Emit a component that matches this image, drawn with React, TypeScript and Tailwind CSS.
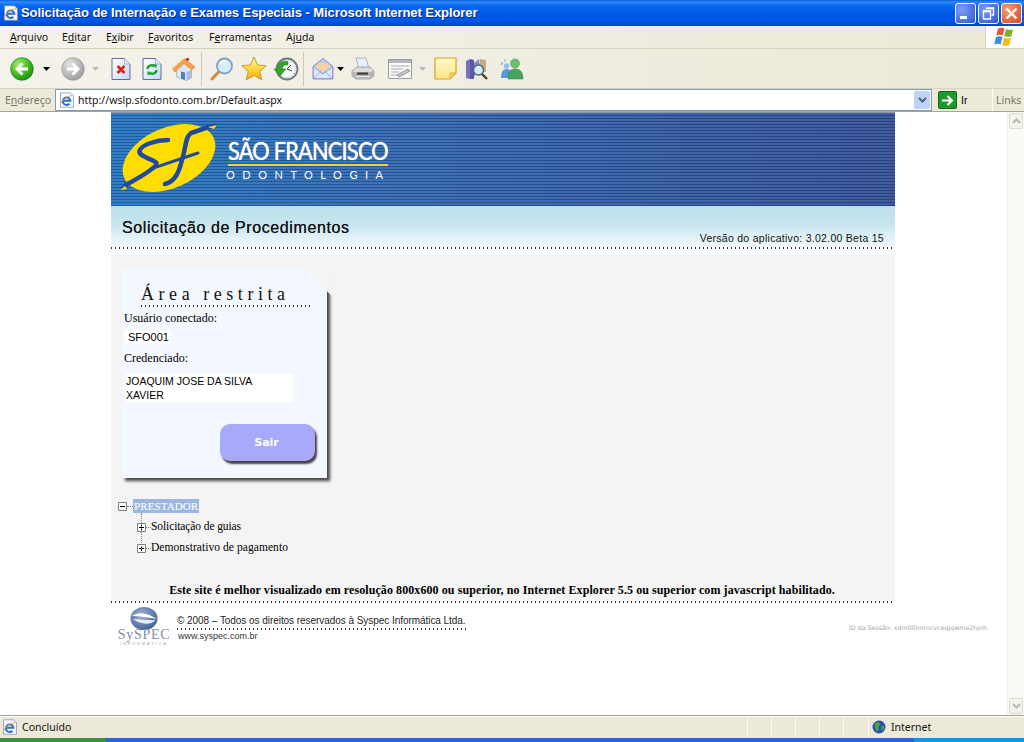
import React from "react";

const serif = "font-['Liberation_Serif',serif]";
const arial = "font-['Liberation_Sans',sans-serif]";

function Arrow({ c = "#000", className = "" }: { c?: string; className?: string }) {
  return (
    <svg width="7" height="4" viewBox="0 0 7 4" className={className}>
      <path d="M0 0h7L3.5 4z" fill={c} />
    </svg>
  );
}

function RoundArrow({ gray = false }: { gray?: boolean }) {
  const id = gray ? "ga" : "gb";
  return (
    <svg width="24" height="24" viewBox="0 0 24 24" className="shrink-0">
      <defs>
        <radialGradient id={id} cx="0.35" cy="0.3" r="0.85">
          <stop offset="0" stopColor={gray ? "#e4e4e4" : "#a8ee70"} />
          <stop offset="0.55" stopColor={gray ? "#b8b8b8" : "#3fb81f"} />
          <stop offset="1" stopColor={gray ? "#8e8e8e" : "#137d10"} />
        </radialGradient>
      </defs>
      <circle cx="12" cy="12" r="11.3" fill={`url(#${id})`} stroke={gray ? "#9a9a9a" : "#1a7f14"} strokeWidth="0.7" />
      {gray ? (
        <path d="M6 12h10M11.500 6.500L17 12l-5.500 5.500" fill="none" stroke="#fff" strokeWidth="2.800" />
      ) : (
        <path d="M18 12H8M12.500 6.500L7 12l5.500 5.500" fill="none" stroke="#fff" strokeWidth="2.800" />
      )}
    </svg>
  );
}

function PageBase({ children }: { children: React.ReactNode }) {
  return (
    <svg width="20" height="24" viewBox="0 0 20 24" className="shrink-0">
      <defs>
        <linearGradient id="pg" x1="0" y1="0" x2="1" y2="1">
          <stop offset="0" stopColor="#fff" />
          <stop offset="1" stopColor="#c5d5f2" />
        </linearGradient>
      </defs>
      <path d="M1 1.5h12.5L19 7v15.5H1z" fill="url(#pg)" stroke="#5e6f9f" />
      <path d="M13.5 1.5V7H19" fill="#e8eefb" stroke="#8b9ac0" strokeWidth="0.7" />
      {children}
    </svg>
  );
}

function Home() {
  return (
    <svg width="24" height="24" viewBox="0 0 24 24" className="shrink-0">
      <path d="M4.500 11.500L12 6l7.500 5.500V21l-5 2.500L4.500 20z" fill="#dce6f5" stroke="#8a9ab8" strokeWidth="0.6" />
      <path d="M14.500 23.400v-8l4.800-2.300V21z" fill="#a9bce0" />
      <path d="M9 21.500v-7l4 1v7.500z" fill="#4d7cc4" />
      <path d="M0.500 12L12.500 1.500 23 10l-3.200 3L12 6.500 3 15z" fill="#f5a24a" stroke="#d67f28" strokeWidth="0.5" />
      <circle cx="15.500" cy="2.300" r="1.600" fill="#b8332a" />
    </svg>
  );
}

function Search() {
  return (
    <svg width="24" height="24" viewBox="0 0 24 24" className="shrink-0">
      <path d="M2 22l7.500-8" stroke="#d18c3d" strokeWidth="3" strokeLinecap="round" />
      <circle cx="14.500" cy="9" r="7.500" fill="#d7ecfb" stroke="#7d9fc6" strokeWidth="1.800" />
      <path d="M10 7a5 4 0 0 1 6-2.500" stroke="#fff" strokeWidth="2" fill="none" />
    </svg>
  );
}

function Star() {
  return (
    <svg width="26" height="25" viewBox="0 0 26 25" className="shrink-0">
      <defs>
        <linearGradient id="st" x1="0" y1="0" x2="0" y2="1">
          <stop offset="0" stopColor="#fff6a8" />
          <stop offset="0.6" stopColor="#ffd22d" />
          <stop offset="1" stopColor="#f6a913" />
        </linearGradient>
      </defs>
      <path d="M13 1l3.600 8 8.600.8-6.500 5.600 2 8.400L13 19.400 5.300 23.800l2-8.400L.8 9.800 9.400 9z" fill="url(#st)" stroke="#b98a15" strokeWidth="0.8" />
    </svg>
  );
}

function History() {
  return (
    <svg width="26" height="24" viewBox="0 0 26 24" className="shrink-0">
      <circle cx="14" cy="12" r="10.500" fill="#dfe7ee" stroke="#6c7d7c" strokeWidth="1.800" />
      <circle cx="14" cy="12" r="7.500" fill="#f7f9fb" />
      <path d="M14 12l4-4M14 12l5 2" stroke="#444" strokeWidth="1" />
      <path d="M21.500 6l1 1M22 17l-1-1" stroke="#d66" strokeWidth="1" />
      <path d="M15 4.500C8 3 4.500 7 4.500 12H1l6 7 6-7H9.500C9.500 9 11 7.500 15 8z" fill="#37a32a" stroke="#1d7a18" strokeWidth="0.5" />
    </svg>
  );
}

function Mail() {
  return (
    <svg width="22" height="24" viewBox="0 0 22 24" className="shrink-0">
      <path d="M1 9.500L11 1.500l10 8V22H1z" fill="#bfc9ee" stroke="#8e8fc9" />
      <path d="M4 10l3-4h8l3 4-7 5z" fill="#f4d49c" />
      <path d="M1.500 10l9.500 7 9.500-7v11.500h-19z" fill="#dce8fb" stroke="#8e8fc9" strokeWidth="0.7" />
      <path d="M1.500 21.500L9 14.500M20.500 21.500L13 14.500" stroke="#8e8fc9" strokeWidth="0.7" />
    </svg>
  );
}

function Printer() {
  return (
    <svg width="24" height="24" viewBox="0 0 24 24" className="shrink-0">
      <path d="M5 1h10l3 11H8z" fill="#e6f0fb" stroke="#8fa6c0" strokeWidth="0.8" />
      <path d="M1 14l5-4h13l4 4v5l-4 3H5l-4-3z" fill="#dcdcdc" stroke="#8a8a8a" strokeWidth="0.7" />
      <path d="M1.500 15h17.500l3.500-1v5l-3.500 2.500H5l-3.500-2.500z" fill="#b4b4b4" />
      <path d="M6 15.500h11v2.200H6z" fill="#3f3f3f" />
      <path d="M5 19.500h14" stroke="#ededed" />
    </svg>
  );
}

function EditIcon() {
  return (
    <svg width="24" height="20" viewBox="0 0 24 20" className="shrink-0">
      <path d="M.5 .5h23v19H.5z" fill="#fafafa" stroke="#9b9b9b" />
      <path d="M1 1h22v3H1z" fill="#b5b5b5" />
      <path d="M3 7h18M3 10h12M3 13h8M3 16h6" stroke="#aaa" />
      <path d="M9 16l11-6 2 2-11 6z" fill="#c9c9c9" stroke="#777" strokeWidth="0.7" />
    </svg>
  );
}

function Note() {
  return (
    <svg width="23" height="23" viewBox="0 0 23 23" className="shrink-0">
      <defs>
        <linearGradient id="nt" x1="0" y1="0" x2="0" y2="1">
          <stop offset="0" stopColor="#fff9c4" />
          <stop offset="1" stopColor="#fde48a" />
        </linearGradient>
      </defs>
      <path d="M1 1h21v15l-6 6H1z" fill="url(#nt)" stroke="#d9a224" strokeWidth="1.200" />
      <path d="M16 22v-6h6z" fill="#f0d070" stroke="#d9a224" strokeWidth="0.7" />
    </svg>
  );
}

function Research() {
  return (
    <svg width="24" height="24" viewBox="0 0 24 24" className="shrink-0">
      <path d="M1 4l4-2v20l-4-1z" fill="#7470bd" />
      <path d="M5 2l4 1v19l-4 0z" fill="#5c58a8" />
      <path d="M9 6l5-4 1 8-6 10z" fill="#8d86c9" />
      <path d="M15 2l6 1v12H15z" fill="#c3ae7d" />
      <circle cx="13.500" cy="13" r="5" fill="#d8ecf7" stroke="#506a80" strokeWidth="1.500" />
      <path d="M17 17l5 5" stroke="#54391c" strokeWidth="2.400" />
    </svg>
  );
}

function Messenger() {
  return (
    <svg width="24" height="22" viewBox="0 0 24 22" className="shrink-0">
      <circle cx="6.500" cy="8" r="2.800" fill="#8ec2ea" />
      <path d="M1 20c0-6 2-9 5.500-9S12 14 12 20z" fill="#5b9ad8" />
      <circle cx="15" cy="5.500" r="4.500" fill="#6cc06c" stroke="#3b8f4b" strokeWidth="0.5" />
      <path d="M8 21c0-8 2.500-10 7-10s8 2 8 10z" fill="#4aa35c" stroke="#3a7f4c" strokeWidth="0.5" />
      <path d="M1 7l1.500-3M5 3.500V1.500" stroke="#5b95c9" strokeWidth="1" />
    </svg>
  );
}

function IEIcon({ size = 16 }: { size?: number }) {
  return (
    <svg width={size} height={size} viewBox="0 0 16 16" className="shrink-0">
      <path d="M1.500 .8h10l3 3v11.500h-13z" fill="#f6f8fd" stroke="#7a8bb5" strokeWidth="0.7" />
      <path d="M4 8.800h7.400A3.800 3.800 0 1 0 10.400 11.800" fill="none" stroke="#2e6fc9" strokeWidth="2" />
      <path d="M1 13.500C2.500 8 8 4 13.500 3.500" fill="none" stroke="#e8a92a" strokeWidth="0.9" />
    </svg>
  );
}

function WinFlag() {
  return (
    <svg width="22" height="20" viewBox="0 0 22 20">
      <path d="M4 1.500c2.500-1 4.500-1 6.500 0l-1.700 7c-2-1-4-1-6.500 0z" fill="#e8562a" />
      <path d="M12 2c2.500 1 4.500 1 7 .5l-1.700 7c-2.500.5-4.500.5-7-.5z" fill="#7ab42c" />
      <path d="M2 10c2.500-1 4.500-1 6.500 0l-1.800 7.500c-2-1-4-1-6.500 0z" fill="#3f8fdc" />
      <path d="M10 10.500c2.500 1 4.500 1 7 .5l-1.800 7.500c-2.500.5-4.500.5-7-.5z" fill="#f4bc1c" />
    </svg>
  );
}

function SFLogo() {
  return (
    <svg width="120" height="90" viewBox="0 0 120 90" className="shrink-0">
      <ellipse cx="58" cy="46" rx="49" ry="30" transform="rotate(-24 58 46)" fill="#ffdd00" />
      <path d="M104 14L96 15.500 80 21C74 25 75 36 71 48 68 60 64 70 54 72" fill="none" stroke="#1f4a9e" strokeWidth="4.500" strokeLinecap="round" />
      <path d="M97 15l9-2-3 4z" fill="#ffdd00" />
      <path d="M57 28C45 28 30 33 28.500 39c-1 6 14 8 17 12 1 4-16 14-31 22" fill="none" stroke="#1f4a9e" strokeWidth="4.500" strokeLinecap="round" />
      <path d="M11 76L45 55 87 41" fill="none" stroke="#1f4a9e" strokeWidth="3" strokeLinecap="round" />
      <path d="M9 78l5-4 2 3z" fill="#ffdd00" />
    </svg>
  );
}

function SyspecOrb() {
  return (
    <svg width="28" height="23" viewBox="0 0 28 23" className="shrink-0">
      <defs>
        <radialGradient id="sy" cx="0.4" cy="0.35" r="0.8">
          <stop offset="0" stopColor="#9fb1cf" />
          <stop offset="1" stopColor="#2f5490" />
        </radialGradient>
      </defs>
      <ellipse cx="14" cy="11.500" rx="13.500" ry="11.500" fill="url(#sy)" />
      <path d="M2 9c7-5 16-3 25 3-7-1-17-3-25-3z" fill="#fff" />
      <path d="M3 12c9 0 17 2 23 1-5 5-15 5-23-1z" fill="#e8edf5" />
    </svg>
  );
}

function TreeBox({ minus = false }: { minus?: boolean }) {
  return (
    <svg width="9" height="9" viewBox="0 0 9 9" className="shrink-0">
      <path d="M.5 .5h8v8h-8z" fill="#fff" stroke="#808080" />
      <path d="M2 4.500h5" stroke="#000" />
      {!minus && <path d="M4.500 2v5" stroke="#000" />}
    </svg>
  );
}

const Dots = ({ className = "" }: { className?: string }) => (
  <div className={`h-[2px] bg-[repeating-linear-gradient(90deg,#333_0_1px,transparent_1px_4px)] ${className}`} />
);

export default function App() {
  return (
    <div className={`w-[1024px] h-[742px] overflow-hidden flex flex-col bg-white ${arial}`}>
      {/* Title bar */}
      <div className="h-[26px] shrink-0 flex items-center bg-[linear-gradient(180deg,#0a5fe0_0%,#2e8cf5_8%,#0a6af0_20%,#0055e5_55%,#0058ea_80%,#0043c0_100%)]">
        <div className="ml-[3px] w-[16px]">
          <IEIcon />
        </div>
        <span className="ml-[2px] text-white font-bold text-[13px] tracking-[-0.07px] [text-shadow:1px_1px_0_#0a2a80] whitespace-nowrap">
          Solicitação de Internação e Exames Especiais - Microsoft Internet Explorer
        </span>
        <div className="ml-auto mr-[2px] flex gap-[2px]">
          <div className="w-[21px] h-[21px] rounded-[3px] border border-white bg-[radial-gradient(circle_at_30%_30%,#7d9eef,#2a56d8)] flex items-end pb-[4px] pl-[4px]">
            <div className="w-[7px] h-[3px] bg-white" />
          </div>
          <div className="w-[21px] h-[21px] rounded-[3px] border border-white bg-[radial-gradient(circle_at_30%_30%,#7d9eef,#2a56d8)] flex items-center justify-center">
            <svg width="13" height="13" viewBox="0 0 13 13">
              <path d="M4.500 1h7v7h-2M1.500 4h7v8h-7z" fill="none" stroke="#fff" strokeWidth="1.300" />
              <path d="M1 4.500h8M4 1.500h8" stroke="#fff" strokeWidth="1.500" />
            </svg>
          </div>
          <div className="w-[21px] h-[21px] rounded-[3px] border border-white bg-[radial-gradient(circle_at_30%_30%,#f0a080,#d4431c)] flex items-center justify-center">
            <svg width="13" height="13" viewBox="0 0 13 13">
              <path d="M1.500 1.500l10 10M11.500 1.500l-10 10" stroke="#fff" strokeWidth="2.200" />
            </svg>
          </div>
        </div>
      </div>

      {/* Menu */}
      <div className="h-[23px] shrink-0 flex items-center text-[10.5px] text-[#111] border-b border-[#d8d2bd] bg-[linear-gradient(90deg,#f4f2ea,#ece9d8)]">
        <div className="flex flex-1 pl-[10px] pt-px font-['Noto_Sans',sans-serif]">
          <span className="w-[52px]"><u>A</u>rquivo</span>
          <span className="w-[44px]">E<u>d</u>itar</span>
          <span className="w-[42px]">E<u>x</u>ibir</span>
          <span className="w-[61px]"><u>F</u>avoritos</span>
          <span className="w-[77px]">F<u>e</u>rramentas</span>
          <span>Aj<u>u</u>da</span>
        </div>
        <div className="w-[39px] h-full bg-white border-l border-[#d8d2bd] flex items-center justify-center">
          <WinFlag />
        </div>
      </div>

      {/* Toolbar */}
      <div className="h-[40px] shrink-0 flex items-center border-b border-[#d8d2bd] bg-[linear-gradient(90deg,#f4f2ea,#ece9d8)]">
        <div className="ml-[10px]"><RoundArrow /></div>
        <Arrow className="ml-[9px]" />
        <div className="ml-[11px]"><RoundArrow gray /></div>
        <Arrow c="#bbb" className="ml-[7px]" />
        <div className="ml-[12px]">
          <PageBase><path d="M6.500 9l7 7M13.500 9l-7 7" stroke="#dd2211" strokeWidth="2.600" /></PageBase>
        </div>
        <div className="ml-[11px]">
          <PageBase>
            <path d="M5.500 12c0-3 4-5 7-2.500M14.500 13c0 3-4 5-7 2.500" fill="none" stroke="#22a228" strokeWidth="2.400" />
            <path d="M11 7l4 .5-1 4zM9 18l-4-.5 1-4z" fill="#22a228" />
          </PageBase>
        </div>
        <div className="ml-[10px]"><Home /></div>
        <div className="ml-[5px] w-px h-[34px] bg-[#cfc9b4]" />
        <div className="ml-[8px]"><Search /></div>
        <div className="ml-[7px]"><Star /></div>
        <div className="ml-[6px]"><History /></div>
        <div className="ml-[4px] w-px h-[34px] bg-[#cfc9b4]" />
        <div className="ml-[8px]"><Mail /></div>
        <Arrow className="ml-[3px]" />
        <div className="ml-[7px]"><Printer /></div>
        <div className="ml-[13px]"><EditIcon /></div>
        <Arrow c="#bbb" className="ml-[7px]" />
        <div className="ml-[8px]"><Note /></div>
        <div className="ml-[8px]"><Research /></div>
        <div className="ml-[11px]"><Messenger /></div>
      </div>

      {/* Address bar */}
      <div className="h-[23px] shrink-0 flex items-stretch text-[10.5px] bg-[#ece9d8] border-b border-[#a9a595]">
        <span className="w-[55px] pl-[5px] pt-[2px] self-center text-[#77776b] font-['Noto_Sans',sans-serif]">E<u>n</u>dereço</span>
        <div className="w-[877px] bg-white border border-[#7f9db9] flex items-center pl-[3px] pr-[1px]">
          <IEIcon />
          <span className="ml-[3px] pt-[2px] text-[#111] font-['Noto_Sans',sans-serif]">http://wslp.sfodonto.com.br/Default.aspx</span>
          <div className="ml-auto w-[16px] h-[18px] bg-[#c0d2f5] rounded-[2px] flex items-center justify-center">
            <svg width="9" height="6" viewBox="0 0 9 6">
              <path d="M1 1l3.500 3.500L8 1" fill="none" stroke="#4d6185" strokeWidth="2" />
            </svg>
          </div>
        </div>
        <div className="ml-[6px] self-center w-[19px] h-[18px] rounded-[2px] bg-[#1f9a2c] border border-[#0f6a18] flex items-center justify-center">
          <svg width="13" height="11" viewBox="0 0 13 11">
            <path d="M1 5.500h9M6.500 1l4.500 4.500L6.500 10" fill="none" stroke="#fff" strokeWidth="2" />
          </svg>
        </div>
        <span className="ml-[4px] pt-px self-center w-[31px] text-black">Ir</span>
        <div className="border-l border-[#fff] self-stretch pl-[3px] pt-px flex items-center text-[#77776b] font-['Noto_Sans',sans-serif]">Links</div>
      </div>

      {/* Page */}
      <div className="flex-1 flex min-h-0">
        <div className="flex-1 min-w-0 pl-[111px] pr-[112px]">
          <div className="h-px bg-[#8f96a3]" />
          {/* Banner */}
          <div className="h-[93px] flex items-start overflow-hidden bg-[repeating-linear-gradient(180deg,rgba(255,255,255,0.1)_0_2px,rgba(0,0,30,0.16)_2px_3px),linear-gradient(90deg,#1d6fbc_0%,#2a62ac_35%,#2d4a92_100%)]">
            <div className="-mt-[1px]"><SFLogo /></div>
            <div className="ml-[-3px] mt-[21px] w-[160px] text-white">
              <div className="font-['Lato',sans-serif] text-[25px] leading-[32px] h-[30px] whitespace-nowrap tracking-[-0.9px] [text-shadow:0_0_1px_#fff] scale-x-[0.87] origin-left">SÃO FRANCISCO</div>
              <div className="h-[2px] bg-[#e8d838]" />
              <div className="text-[11px] leading-[16px] font-['Lato',sans-serif] tracking-[7.500px] mt-[1px] whitespace-nowrap -ml-[2px]">ODONTOLOGIA</div>
            </div>
          </div>
          {/* Subheader */}
          <div className="h-[41px] flex items-end justify-between pl-[11px] pr-[11px] bg-[linear-gradient(180deg,#bde0ec_0%,#c5e4ee_40%,#f2fafd_100%)]">
            <span className="text-[16px] leading-[20px] pb-[9px] text-[#111] tracking-[0.6px] [text-shadow:0_0_0.5px_#333]">Solicitação de Procedimentos</span>
            <span className="text-[10.500px] leading-[12px] pb-[3px] tracking-[0.28px] text-[#111]">Versão do aplicativo: 3.02.00 Beta 15</span>
          </div>
          <Dots />
          <div className="h-[6px] bg-[#f7fcfe]" />
          {/* Main gray panel */}
          <div className="h-[346px] bg-[#f4f4f4] pt-[13px] flex flex-col">
            <div className={`relative ml-[11px] w-[205px] h-[210px] bg-[#f3f7fe] shadow-[3px_3px_3px_#444] pt-[16px] pl-[2px] shrink-0 ${serif}`}>
              <div className="absolute -right-[6px] -top-[1px] w-[31px] h-[30px] bg-[#f4f4f4] [clip-path:polygon(0_0,100%_0,100%_100%)]" />
              <div className="text-[18px] leading-[21px] tracking-[4.550px] pl-[17px] text-[#111] whitespace-nowrap">Área restrita</div>
              <Dots className="ml-[17px] mr-[15px]" />
              <div className="text-[12px] leading-[14px] mt-[4px] text-black">Usuário conectado:</div>
              <div className={`mt-[5px] ml-[1px] w-[46px] h-[14px] bg-white text-[11px] leading-[14px] pl-[3px] text-black ${arial}`}>SFO001</div>
              <div className="text-[12px] leading-[14px] mt-[7px] text-black">Credenciado:</div>
              <div className={`mt-[9px] ml-[2px] w-[167px] h-[28px] bg-white text-[10.500px] leading-[14px] text-black ${arial}`}>
                JOAQUIM JOSE DA SILVA
                <br />
                XAVIER
              </div>
              <div className="ml-[96px] mt-[22px] w-[95px] h-[37px] pt-px pr-[2px] rounded-[10px] bg-[#a9a9fb] shadow-[2px_3px_2px_#444] flex items-center justify-center text-white font-bold text-[11px] font-['DejaVu_Sans',sans-serif]">
                Sair
              </div>
            </div>
            {/* Tree */}
            <div className={`relative mt-[21px] ml-[7px] text-[11.500px] ${serif}`}>
              <div className="absolute left-[23px] top-[14px] h-[36px] border-l border-dotted border-[#808080]" />
              <div className="flex items-center h-[14px]">
                <TreeBox minus />
                <div className="w-[6px] border-t border-dotted border-[#808080]" />
                <span className="bg-[#9db8e0] text-white px-px text-[11px] leading-[14px] tracking-[0.1px]">PRESTADOR</span>
              </div>
              <div className="ml-[19px] mt-[7px] flex items-center h-[14px]">
                <TreeBox />
                <div className="w-[5px] border-t border-dotted border-[#808080]" />
                <span className="text-black tracking-[-0.1px]">Solicitação de guias</span>
              </div>
              <div className="ml-[19px] mt-[7px] flex items-center h-[14px]">
                <TreeBox />
                <div className="w-[5px] border-t border-dotted border-[#808080]" />
                <span className="text-black tracking-[0.06px]">Demonstrativo de pagamento</span>
              </div>
            </div>
            <div className={`mt-[28px] pr-[2px] text-center text-[12px] leading-[14px] font-bold text-black tracking-[0.085px] ${serif}`}>
              Este site é melhor visualizado em resolução 800x600 ou superior, no Internet Explorer 5.5 ou superior com javascript habilitado.
            </div>
          </div>
          <Dots />
          {/* Footer */}
          <div className="flex relative overflow-visible">
            <div className="ml-[7px] w-[52px] flex flex-col items-center mt-[4px]">
              <SyspecOrb />
              <div className={`text-[14px] leading-[10px] tracking-[0.7px] text-[#7f8da6] whitespace-nowrap ${serif}`}>SySPEC</div>
              <div className="text-[4px] leading-[5px] mt-[1px] tracking-[1.800px] text-[#9aa3b3] whitespace-nowrap">INFORMÁTICA</div>
            </div>
            <div className="ml-[7px] mt-[12px]">
              <div className="text-[10px] leading-[12px] text-[#222] tracking-[-0.05px] whitespace-nowrap">© 2008 – Todos os direitos reservados à Syspec Informática Ltda.</div>
              <Dots className="mt-[1px]" />
              <div className="text-[9px] leading-[12px] text-[#333] ml-px">www.syspec.com.br</div>
            </div>
            <div className="absolute top-[20px] left-[738px] whitespace-nowrap text-[6.300px] leading-[10px] text-[#a8a8a8] font-['DejaVu_Sans',sans-serif]">
              ID da Sessão: xdm00imrocvceqjqwme2hjnh
            </div>
          </div>
        </div>
        {/* Scrollbar */}
        <div className="w-[17px] shrink-0 bg-[#fafaf5] flex flex-col justify-between border-l border-[#eeeee6] p-px">
          <div className="h-[16px] rounded-[2px] bg-[#f4f3ec] border border-[#dedcd0] flex items-center justify-center">
            <svg width="9" height="6" viewBox="0 0 9 6"><path d="M1 5l3.500-3.500L8 5" fill="none" stroke="#b8b8b0" strokeWidth="2" /></svg>
          </div>
          <div className="h-[16px] rounded-[2px] bg-[#f4f3ec] border border-[#dedcd0] flex items-center justify-center">
            <svg width="9" height="6" viewBox="0 0 9 6"><path d="M1 1l3.500 3.500L8 1" fill="none" stroke="#b8b8b0" strokeWidth="2" /></svg>
          </div>
        </div>
      </div>

      {/* Status bar */}
      <div className="h-[23px] shrink-0 border-t border-[#a5a294] bg-[#ece9d8] flex items-center text-[10.5px] text-[#111] font-['Noto_Sans',sans-serif] shadow-[inset_0_1px_0_#fff]">
        <div className="ml-[2px]"><IEIcon /></div>
        <span className="ml-[4px] w-[725px] pt-px">Concluído</span>
        <div className="w-[24px] h-[18px] border-l border-[#fbfaf4]" />
        <div className="w-[24px] h-[18px] border-l border-[#fbfaf4]" />
        <div className="w-[24px] h-[18px] border-l border-[#fbfaf4]" />
        <div className="w-[24px] h-[18px] border-l border-[#fbfaf4]" />
        <div className="w-[25px] h-[18px] border-l border-[#fbfaf4]" />
        <div className="h-[18px] border-l border-[#fbfaf4] pl-[3px] flex items-center">
          <svg width="14" height="14" viewBox="0 0 14 14" className="shrink-0">
            <circle cx="7" cy="7" r="6.500" fill="#2b4fb0" />
            <path d="M3 3l4-1 1 3-2 2 1 3-2 2-2-4zM9 6l3 0 0 3-2 2z" fill="#4aa83a" />
          </svg>
          <span className="ml-[5px] pt-px">Internet</span>
        </div>
      </div>

      {/* Taskbar */}
      <div className="h-[4px] shrink-0 flex">
        <div className="w-[106px] bg-[#3c8f3c]" />
        <div className="w-[808px] bg-[#2a65d8]" />
        <div className="flex-1 bg-[#1296e0]" />
      </div>
    </div>
  );
}
